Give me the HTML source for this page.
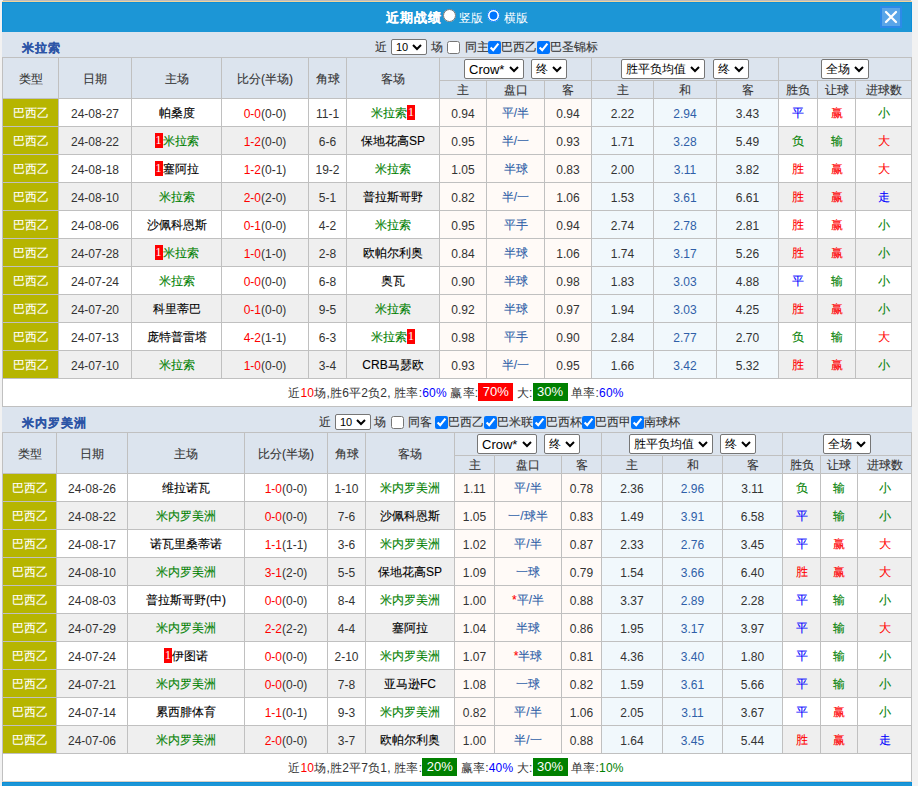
<!DOCTYPE html><html><head><meta charset="utf-8"><style>
*{margin:0;padding:0;box-sizing:border-box}
html,body{width:918px;height:786px;overflow:hidden;background:#f2f2f2}
body{position:relative;font-family:"Liberation Sans",sans-serif;font-size:12px;color:#333}
div{position:absolute}
.t{text-align:center;white-space:nowrap}
.s{white-space:nowrap;line-height:14px}
.bd{-webkit-text-stroke:0;display:inline-block;background:#f00;color:#fff;font-weight:normal;width:8px;height:15px;line-height:15px;font-size:12px;text-align:center;vertical-align:middle;position:relative;top:-1px;font-family:"Liberation Serif",serif}
.rb{-webkit-text-stroke:0;display:inline-block;background:#f00;color:#fff;font-weight:normal;width:35px;text-align:center;height:18px;line-height:18px;font-size:13px;letter-spacing:0;position:relative;top:-1px}
.gb{-webkit-text-stroke:0;display:inline-block;background:#008000;color:#fff;font-weight:normal;width:35px;text-align:center;height:18px;line-height:18px;font-size:13px;letter-spacing:0;position:relative;top:-1px}
.sl{background:#fff;border:1px solid #767676;border-radius:2px}
.st{white-space:nowrap;color:#000}
input.cb{position:absolute;margin:0;width:13px;height:13px}
input.rd{position:absolute;margin:0;width:13px;height:13px}
</style></head><body><div style="left:3px;top:0px;width:908px;height:1px;background:#bcbcc0;"></div><div style="left:2px;top:1px;width:910px;height:1px;background:#f0d49a;"></div><div style="left:2px;top:2px;width:910px;height:30px;background:#1c96d6;box-shadow:inset 1px 1px 0 #0b8ed9,inset -1px 0 0 #0b8ed9"></div><div style="left:2px;top:32px;width:910px;height:750px;background:#dce4ee;"></div><div class="s" style="left:386px;top:11px;color:#fff;font-weight:bold;font-size:13px;letter-spacing:1px;-webkit-text-stroke:0.1px #fff">近期战绩</div><input type="radio" name="r" class="rd" style="left:443px;top:9px"><div class="s" style="left:459px;top:11px;color:#fff">竖版</div><input type="radio" name="r" class="rd" style="left:487px;top:9px" checked><div class="s" style="left:504px;top:11px;color:#fff">横版</div><div style="left:880px;top:6px;width:22px;height:22px;background:#5aa5e8;box-shadow:inset 0 0 0 2px #2d8ae8"></div><svg style="position:absolute;left:880px;top:6px" width="22" height="22"><path d="M6 6L16 16M16 6L6 16" stroke="#fff" stroke-width="2.3" stroke-linecap="round"/></svg><div class="s" style="left:22px;top:41px;font-weight:bold;font-size:12px;letter-spacing:1px;color:#2c54a6;-webkit-text-stroke:0.15px #2c54a6">米拉索</div><div style="left:2px;top:57px;width:910px;height:350px;background:#c0c0c0;"></div><div style="left:3px;top:58px;width:55px;height:40px;background:#dce4ee;"></div><div class="t" style="left:3px;top:59px;width:55px;height:40px;line-height:40px;color:#333333;-webkit-text-stroke:0.1px currentColor">类型</div><div style="left:59px;top:58px;width:72px;height:40px;background:#dce4ee;"></div><div class="t" style="left:59px;top:59px;width:72px;height:40px;line-height:40px;color:#333333;-webkit-text-stroke:0.1px currentColor">日期</div><div style="left:132px;top:58px;width:89px;height:40px;background:#dce4ee;"></div><div class="t" style="left:132px;top:59px;width:89px;height:40px;line-height:40px;color:#333333;-webkit-text-stroke:0.1px currentColor">主场</div><div style="left:222px;top:58px;width:86px;height:40px;background:#dce4ee;"></div><div class="t" style="left:222px;top:59px;width:86px;height:40px;line-height:40px;color:#333333;-webkit-text-stroke:0.1px currentColor">比分(半场)</div><div style="left:309px;top:58px;width:37px;height:40px;background:#dce4ee;"></div><div class="t" style="left:309px;top:59px;width:37px;height:40px;line-height:40px;color:#333333;-webkit-text-stroke:0.1px currentColor">角球</div><div style="left:347px;top:58px;width:92px;height:40px;background:#dce4ee;"></div><div class="t" style="left:347px;top:59px;width:92px;height:40px;line-height:40px;color:#333333;-webkit-text-stroke:0.1px currentColor">客场</div><div style="left:440px;top:58px;width:151px;height:22px;background:#dce4ee;"></div><div style="left:592px;top:58px;width:186px;height:22px;background:#dce4ee;"></div><div style="left:779px;top:58px;width:132px;height:22px;background:#dce4ee;"></div><div style="left:440px;top:81px;width:46px;height:17px;background:#dce4ee;"></div><div class="t" style="left:440px;top:82px;width:46px;height:17px;line-height:17px;color:#333333;-webkit-text-stroke:0.1px currentColor">主</div><div style="left:487px;top:81px;width:57px;height:17px;background:#dce4ee;"></div><div class="t" style="left:487px;top:82px;width:57px;height:17px;line-height:17px;color:#333333;-webkit-text-stroke:0.1px currentColor">盘口</div><div style="left:545px;top:81px;width:46px;height:17px;background:#dce4ee;"></div><div class="t" style="left:545px;top:82px;width:46px;height:17px;line-height:17px;color:#333333;-webkit-text-stroke:0.1px currentColor">客</div><div style="left:592px;top:81px;width:61px;height:17px;background:#dce4ee;"></div><div class="t" style="left:592px;top:82px;width:61px;height:17px;line-height:17px;color:#333333;-webkit-text-stroke:0.1px currentColor">主</div><div style="left:654px;top:81px;width:62px;height:17px;background:#dce4ee;"></div><div class="t" style="left:654px;top:82px;width:62px;height:17px;line-height:17px;color:#333333;-webkit-text-stroke:0.1px currentColor">和</div><div style="left:717px;top:81px;width:61px;height:17px;background:#dce4ee;"></div><div class="t" style="left:717px;top:82px;width:61px;height:17px;line-height:17px;color:#333333;-webkit-text-stroke:0.1px currentColor">客</div><div style="left:779px;top:81px;width:38px;height:17px;background:#dce4ee;"></div><div class="t" style="left:779px;top:82px;width:38px;height:17px;line-height:17px;color:#333333;-webkit-text-stroke:0.1px currentColor">胜负</div><div style="left:818px;top:81px;width:37px;height:17px;background:#dce4ee;"></div><div class="t" style="left:818px;top:82px;width:37px;height:17px;line-height:17px;color:#333333;-webkit-text-stroke:0.1px currentColor">让球</div><div style="left:856px;top:81px;width:55px;height:17px;background:#dce4ee;"></div><div class="t" style="left:856px;top:82px;width:55px;height:17px;line-height:17px;color:#333333;-webkit-text-stroke:0.1px currentColor">进球数</div><div style="left:3px;top:99px;width:55px;height:27px;background:#b6b500;"></div><div class="t" style="left:3px;top:100px;width:55px;height:27px;line-height:27px;color:#fff;-webkit-text-stroke:0.1px currentColor">巴西乙</div><div style="left:59px;top:99px;width:72px;height:27px;background:#ffffff;"></div><div class="t" style="left:59px;top:101px;width:72px;height:27px;line-height:27px;color:#333333">24-08-27</div><div style="left:132px;top:99px;width:89px;height:27px;background:#ffffff;"></div><div class="t" style="left:132px;top:100px;width:89px;height:27px;line-height:27px;color:#000;-webkit-text-stroke:0.1px currentColor">帕桑度</div><div style="left:222px;top:99px;width:86px;height:27px;background:#ffffff;"></div><div class="t" style="left:222px;top:101px;width:86px;height:27px;line-height:27px;color:#333333"><span style="color:#ff0000">0-0</span>(0-0)</div><div style="left:309px;top:99px;width:37px;height:27px;background:#ffffff;"></div><div class="t" style="left:309px;top:101px;width:37px;height:27px;line-height:27px;color:#333333">11-1</div><div style="left:347px;top:99px;width:92px;height:27px;background:#ffffff;"></div><div class="t" style="left:347px;top:100px;width:92px;height:27px;line-height:27px;color:#000;-webkit-text-stroke:0.1px currentColor"><span style="color:#008000">米拉索</span><b class="bd">1</b></div><div style="left:440px;top:99px;width:46px;height:27px;background:#fffaf7;"></div><div class="t" style="left:440px;top:101px;width:46px;height:27px;line-height:27px;color:#333333">0.94</div><div style="left:487px;top:99px;width:57px;height:27px;background:#fffaf7;"></div><div class="t" style="left:487px;top:100px;width:57px;height:27px;line-height:27px;color:#2f5fa8;-webkit-text-stroke:0.1px currentColor">平/半</div><div style="left:545px;top:99px;width:46px;height:27px;background:#fffaf7;"></div><div class="t" style="left:545px;top:101px;width:46px;height:27px;line-height:27px;color:#333333">0.94</div><div style="left:592px;top:99px;width:61px;height:27px;background:#f1f8fc;"></div><div class="t" style="left:592px;top:101px;width:61px;height:27px;line-height:27px;color:#333333">2.22</div><div style="left:654px;top:99px;width:62px;height:27px;background:#f1f8fc;"></div><div class="t" style="left:654px;top:101px;width:62px;height:27px;line-height:27px;color:#2f5fa8">2.94</div><div style="left:717px;top:99px;width:61px;height:27px;background:#f1f8fc;"></div><div class="t" style="left:717px;top:101px;width:61px;height:27px;line-height:27px;color:#333333">3.43</div><div style="left:779px;top:99px;width:38px;height:27px;background:#ffffff;"></div><div class="t" style="left:779px;top:100px;width:38px;height:27px;line-height:27px;color:#0000ff;-webkit-text-stroke:0.1px currentColor">平</div><div style="left:818px;top:99px;width:37px;height:27px;background:#ffffff;"></div><div class="t" style="left:818px;top:100px;width:37px;height:27px;line-height:27px;color:#ff0000;-webkit-text-stroke:0.1px currentColor">赢</div><div style="left:856px;top:99px;width:55px;height:27px;background:#ffffff;"></div><div class="t" style="left:856px;top:100px;width:55px;height:27px;line-height:27px;color:#008000;-webkit-text-stroke:0.1px currentColor">小</div><div style="left:3px;top:127px;width:55px;height:27px;background:#b6b500;"></div><div class="t" style="left:3px;top:128px;width:55px;height:27px;line-height:27px;color:#fff;-webkit-text-stroke:0.1px currentColor">巴西乙</div><div style="left:59px;top:127px;width:72px;height:27px;background:#efefef;"></div><div class="t" style="left:59px;top:129px;width:72px;height:27px;line-height:27px;color:#333333">24-08-22</div><div style="left:132px;top:127px;width:89px;height:27px;background:#efefef;"></div><div class="t" style="left:132px;top:128px;width:89px;height:27px;line-height:27px;color:#000;-webkit-text-stroke:0.1px currentColor"><b class="bd">1</b><span style="color:#008000">米拉索</span></div><div style="left:222px;top:127px;width:86px;height:27px;background:#efefef;"></div><div class="t" style="left:222px;top:129px;width:86px;height:27px;line-height:27px;color:#333333"><span style="color:#ff0000">1-2</span>(0-0)</div><div style="left:309px;top:127px;width:37px;height:27px;background:#efefef;"></div><div class="t" style="left:309px;top:129px;width:37px;height:27px;line-height:27px;color:#333333">6-6</div><div style="left:347px;top:127px;width:92px;height:27px;background:#efefef;"></div><div class="t" style="left:347px;top:128px;width:92px;height:27px;line-height:27px;color:#000;-webkit-text-stroke:0.1px currentColor">保地花高SP</div><div style="left:440px;top:127px;width:46px;height:27px;background:#fffaf7;"></div><div class="t" style="left:440px;top:129px;width:46px;height:27px;line-height:27px;color:#333333">0.95</div><div style="left:487px;top:127px;width:57px;height:27px;background:#fffaf7;"></div><div class="t" style="left:487px;top:128px;width:57px;height:27px;line-height:27px;color:#2f5fa8;-webkit-text-stroke:0.1px currentColor">半/一</div><div style="left:545px;top:127px;width:46px;height:27px;background:#fffaf7;"></div><div class="t" style="left:545px;top:129px;width:46px;height:27px;line-height:27px;color:#333333">0.93</div><div style="left:592px;top:127px;width:61px;height:27px;background:#f1f8fc;"></div><div class="t" style="left:592px;top:129px;width:61px;height:27px;line-height:27px;color:#333333">1.71</div><div style="left:654px;top:127px;width:62px;height:27px;background:#f1f8fc;"></div><div class="t" style="left:654px;top:129px;width:62px;height:27px;line-height:27px;color:#2f5fa8">3.28</div><div style="left:717px;top:127px;width:61px;height:27px;background:#f1f8fc;"></div><div class="t" style="left:717px;top:129px;width:61px;height:27px;line-height:27px;color:#333333">5.49</div><div style="left:779px;top:127px;width:38px;height:27px;background:#efefef;"></div><div class="t" style="left:779px;top:128px;width:38px;height:27px;line-height:27px;color:#008000;-webkit-text-stroke:0.1px currentColor">负</div><div style="left:818px;top:127px;width:37px;height:27px;background:#efefef;"></div><div class="t" style="left:818px;top:128px;width:37px;height:27px;line-height:27px;color:#008000;-webkit-text-stroke:0.1px currentColor">输</div><div style="left:856px;top:127px;width:55px;height:27px;background:#efefef;"></div><div class="t" style="left:856px;top:128px;width:55px;height:27px;line-height:27px;color:#ff0000;-webkit-text-stroke:0.1px currentColor">大</div><div style="left:3px;top:155px;width:55px;height:27px;background:#b6b500;"></div><div class="t" style="left:3px;top:156px;width:55px;height:27px;line-height:27px;color:#fff;-webkit-text-stroke:0.1px currentColor">巴西乙</div><div style="left:59px;top:155px;width:72px;height:27px;background:#ffffff;"></div><div class="t" style="left:59px;top:157px;width:72px;height:27px;line-height:27px;color:#333333">24-08-18</div><div style="left:132px;top:155px;width:89px;height:27px;background:#ffffff;"></div><div class="t" style="left:132px;top:156px;width:89px;height:27px;line-height:27px;color:#000;-webkit-text-stroke:0.1px currentColor"><b class="bd">1</b>塞阿拉</div><div style="left:222px;top:155px;width:86px;height:27px;background:#ffffff;"></div><div class="t" style="left:222px;top:157px;width:86px;height:27px;line-height:27px;color:#333333"><span style="color:#ff0000">1-2</span>(0-1)</div><div style="left:309px;top:155px;width:37px;height:27px;background:#ffffff;"></div><div class="t" style="left:309px;top:157px;width:37px;height:27px;line-height:27px;color:#333333">19-2</div><div style="left:347px;top:155px;width:92px;height:27px;background:#ffffff;"></div><div class="t" style="left:347px;top:156px;width:92px;height:27px;line-height:27px;color:#000;-webkit-text-stroke:0.1px currentColor"><span style="color:#008000">米拉索</span></div><div style="left:440px;top:155px;width:46px;height:27px;background:#fffaf7;"></div><div class="t" style="left:440px;top:157px;width:46px;height:27px;line-height:27px;color:#333333">1.05</div><div style="left:487px;top:155px;width:57px;height:27px;background:#fffaf7;"></div><div class="t" style="left:487px;top:156px;width:57px;height:27px;line-height:27px;color:#2f5fa8;-webkit-text-stroke:0.1px currentColor">半球</div><div style="left:545px;top:155px;width:46px;height:27px;background:#fffaf7;"></div><div class="t" style="left:545px;top:157px;width:46px;height:27px;line-height:27px;color:#333333">0.83</div><div style="left:592px;top:155px;width:61px;height:27px;background:#f1f8fc;"></div><div class="t" style="left:592px;top:157px;width:61px;height:27px;line-height:27px;color:#333333">2.00</div><div style="left:654px;top:155px;width:62px;height:27px;background:#f1f8fc;"></div><div class="t" style="left:654px;top:157px;width:62px;height:27px;line-height:27px;color:#2f5fa8">3.11</div><div style="left:717px;top:155px;width:61px;height:27px;background:#f1f8fc;"></div><div class="t" style="left:717px;top:157px;width:61px;height:27px;line-height:27px;color:#333333">3.82</div><div style="left:779px;top:155px;width:38px;height:27px;background:#ffffff;"></div><div class="t" style="left:779px;top:156px;width:38px;height:27px;line-height:27px;color:#ff0000;-webkit-text-stroke:0.1px currentColor">胜</div><div style="left:818px;top:155px;width:37px;height:27px;background:#ffffff;"></div><div class="t" style="left:818px;top:156px;width:37px;height:27px;line-height:27px;color:#ff0000;-webkit-text-stroke:0.1px currentColor">赢</div><div style="left:856px;top:155px;width:55px;height:27px;background:#ffffff;"></div><div class="t" style="left:856px;top:156px;width:55px;height:27px;line-height:27px;color:#ff0000;-webkit-text-stroke:0.1px currentColor">大</div><div style="left:3px;top:183px;width:55px;height:27px;background:#b6b500;"></div><div class="t" style="left:3px;top:184px;width:55px;height:27px;line-height:27px;color:#fff;-webkit-text-stroke:0.1px currentColor">巴西乙</div><div style="left:59px;top:183px;width:72px;height:27px;background:#efefef;"></div><div class="t" style="left:59px;top:185px;width:72px;height:27px;line-height:27px;color:#333333">24-08-10</div><div style="left:132px;top:183px;width:89px;height:27px;background:#efefef;"></div><div class="t" style="left:132px;top:184px;width:89px;height:27px;line-height:27px;color:#000;-webkit-text-stroke:0.1px currentColor"><span style="color:#008000">米拉索</span></div><div style="left:222px;top:183px;width:86px;height:27px;background:#efefef;"></div><div class="t" style="left:222px;top:185px;width:86px;height:27px;line-height:27px;color:#333333"><span style="color:#ff0000">2-0</span>(2-0)</div><div style="left:309px;top:183px;width:37px;height:27px;background:#efefef;"></div><div class="t" style="left:309px;top:185px;width:37px;height:27px;line-height:27px;color:#333333">5-1</div><div style="left:347px;top:183px;width:92px;height:27px;background:#efefef;"></div><div class="t" style="left:347px;top:184px;width:92px;height:27px;line-height:27px;color:#000;-webkit-text-stroke:0.1px currentColor">普拉斯哥野</div><div style="left:440px;top:183px;width:46px;height:27px;background:#fffaf7;"></div><div class="t" style="left:440px;top:185px;width:46px;height:27px;line-height:27px;color:#333333">0.82</div><div style="left:487px;top:183px;width:57px;height:27px;background:#fffaf7;"></div><div class="t" style="left:487px;top:184px;width:57px;height:27px;line-height:27px;color:#2f5fa8;-webkit-text-stroke:0.1px currentColor">半/一</div><div style="left:545px;top:183px;width:46px;height:27px;background:#fffaf7;"></div><div class="t" style="left:545px;top:185px;width:46px;height:27px;line-height:27px;color:#333333">1.06</div><div style="left:592px;top:183px;width:61px;height:27px;background:#f1f8fc;"></div><div class="t" style="left:592px;top:185px;width:61px;height:27px;line-height:27px;color:#333333">1.53</div><div style="left:654px;top:183px;width:62px;height:27px;background:#f1f8fc;"></div><div class="t" style="left:654px;top:185px;width:62px;height:27px;line-height:27px;color:#2f5fa8">3.61</div><div style="left:717px;top:183px;width:61px;height:27px;background:#f1f8fc;"></div><div class="t" style="left:717px;top:185px;width:61px;height:27px;line-height:27px;color:#333333">6.61</div><div style="left:779px;top:183px;width:38px;height:27px;background:#efefef;"></div><div class="t" style="left:779px;top:184px;width:38px;height:27px;line-height:27px;color:#ff0000;-webkit-text-stroke:0.1px currentColor">胜</div><div style="left:818px;top:183px;width:37px;height:27px;background:#efefef;"></div><div class="t" style="left:818px;top:184px;width:37px;height:27px;line-height:27px;color:#ff0000;-webkit-text-stroke:0.1px currentColor">赢</div><div style="left:856px;top:183px;width:55px;height:27px;background:#efefef;"></div><div class="t" style="left:856px;top:184px;width:55px;height:27px;line-height:27px;color:#0000ff;-webkit-text-stroke:0.1px currentColor">走</div><div style="left:3px;top:211px;width:55px;height:27px;background:#b6b500;"></div><div class="t" style="left:3px;top:212px;width:55px;height:27px;line-height:27px;color:#fff;-webkit-text-stroke:0.1px currentColor">巴西乙</div><div style="left:59px;top:211px;width:72px;height:27px;background:#ffffff;"></div><div class="t" style="left:59px;top:213px;width:72px;height:27px;line-height:27px;color:#333333">24-08-06</div><div style="left:132px;top:211px;width:89px;height:27px;background:#ffffff;"></div><div class="t" style="left:132px;top:212px;width:89px;height:27px;line-height:27px;color:#000;-webkit-text-stroke:0.1px currentColor">沙佩科恩斯</div><div style="left:222px;top:211px;width:86px;height:27px;background:#ffffff;"></div><div class="t" style="left:222px;top:213px;width:86px;height:27px;line-height:27px;color:#333333"><span style="color:#ff0000">0-1</span>(0-0)</div><div style="left:309px;top:211px;width:37px;height:27px;background:#ffffff;"></div><div class="t" style="left:309px;top:213px;width:37px;height:27px;line-height:27px;color:#333333">4-2</div><div style="left:347px;top:211px;width:92px;height:27px;background:#ffffff;"></div><div class="t" style="left:347px;top:212px;width:92px;height:27px;line-height:27px;color:#000;-webkit-text-stroke:0.1px currentColor"><span style="color:#008000">米拉索</span></div><div style="left:440px;top:211px;width:46px;height:27px;background:#fffaf7;"></div><div class="t" style="left:440px;top:213px;width:46px;height:27px;line-height:27px;color:#333333">0.95</div><div style="left:487px;top:211px;width:57px;height:27px;background:#fffaf7;"></div><div class="t" style="left:487px;top:212px;width:57px;height:27px;line-height:27px;color:#2f5fa8;-webkit-text-stroke:0.1px currentColor">平手</div><div style="left:545px;top:211px;width:46px;height:27px;background:#fffaf7;"></div><div class="t" style="left:545px;top:213px;width:46px;height:27px;line-height:27px;color:#333333">0.94</div><div style="left:592px;top:211px;width:61px;height:27px;background:#f1f8fc;"></div><div class="t" style="left:592px;top:213px;width:61px;height:27px;line-height:27px;color:#333333">2.74</div><div style="left:654px;top:211px;width:62px;height:27px;background:#f1f8fc;"></div><div class="t" style="left:654px;top:213px;width:62px;height:27px;line-height:27px;color:#2f5fa8">2.78</div><div style="left:717px;top:211px;width:61px;height:27px;background:#f1f8fc;"></div><div class="t" style="left:717px;top:213px;width:61px;height:27px;line-height:27px;color:#333333">2.81</div><div style="left:779px;top:211px;width:38px;height:27px;background:#ffffff;"></div><div class="t" style="left:779px;top:212px;width:38px;height:27px;line-height:27px;color:#ff0000;-webkit-text-stroke:0.1px currentColor">胜</div><div style="left:818px;top:211px;width:37px;height:27px;background:#ffffff;"></div><div class="t" style="left:818px;top:212px;width:37px;height:27px;line-height:27px;color:#ff0000;-webkit-text-stroke:0.1px currentColor">赢</div><div style="left:856px;top:211px;width:55px;height:27px;background:#ffffff;"></div><div class="t" style="left:856px;top:212px;width:55px;height:27px;line-height:27px;color:#008000;-webkit-text-stroke:0.1px currentColor">小</div><div style="left:3px;top:239px;width:55px;height:27px;background:#b6b500;"></div><div class="t" style="left:3px;top:240px;width:55px;height:27px;line-height:27px;color:#fff;-webkit-text-stroke:0.1px currentColor">巴西乙</div><div style="left:59px;top:239px;width:72px;height:27px;background:#efefef;"></div><div class="t" style="left:59px;top:241px;width:72px;height:27px;line-height:27px;color:#333333">24-07-28</div><div style="left:132px;top:239px;width:89px;height:27px;background:#efefef;"></div><div class="t" style="left:132px;top:240px;width:89px;height:27px;line-height:27px;color:#000;-webkit-text-stroke:0.1px currentColor"><b class="bd">1</b><span style="color:#008000">米拉索</span></div><div style="left:222px;top:239px;width:86px;height:27px;background:#efefef;"></div><div class="t" style="left:222px;top:241px;width:86px;height:27px;line-height:27px;color:#333333"><span style="color:#ff0000">1-0</span>(1-0)</div><div style="left:309px;top:239px;width:37px;height:27px;background:#efefef;"></div><div class="t" style="left:309px;top:241px;width:37px;height:27px;line-height:27px;color:#333333">2-8</div><div style="left:347px;top:239px;width:92px;height:27px;background:#efefef;"></div><div class="t" style="left:347px;top:240px;width:92px;height:27px;line-height:27px;color:#000;-webkit-text-stroke:0.1px currentColor">欧帕尔利奥</div><div style="left:440px;top:239px;width:46px;height:27px;background:#fffaf7;"></div><div class="t" style="left:440px;top:241px;width:46px;height:27px;line-height:27px;color:#333333">0.84</div><div style="left:487px;top:239px;width:57px;height:27px;background:#fffaf7;"></div><div class="t" style="left:487px;top:240px;width:57px;height:27px;line-height:27px;color:#2f5fa8;-webkit-text-stroke:0.1px currentColor">半球</div><div style="left:545px;top:239px;width:46px;height:27px;background:#fffaf7;"></div><div class="t" style="left:545px;top:241px;width:46px;height:27px;line-height:27px;color:#333333">1.06</div><div style="left:592px;top:239px;width:61px;height:27px;background:#f1f8fc;"></div><div class="t" style="left:592px;top:241px;width:61px;height:27px;line-height:27px;color:#333333">1.74</div><div style="left:654px;top:239px;width:62px;height:27px;background:#f1f8fc;"></div><div class="t" style="left:654px;top:241px;width:62px;height:27px;line-height:27px;color:#2f5fa8">3.17</div><div style="left:717px;top:239px;width:61px;height:27px;background:#f1f8fc;"></div><div class="t" style="left:717px;top:241px;width:61px;height:27px;line-height:27px;color:#333333">5.26</div><div style="left:779px;top:239px;width:38px;height:27px;background:#efefef;"></div><div class="t" style="left:779px;top:240px;width:38px;height:27px;line-height:27px;color:#ff0000;-webkit-text-stroke:0.1px currentColor">胜</div><div style="left:818px;top:239px;width:37px;height:27px;background:#efefef;"></div><div class="t" style="left:818px;top:240px;width:37px;height:27px;line-height:27px;color:#ff0000;-webkit-text-stroke:0.1px currentColor">赢</div><div style="left:856px;top:239px;width:55px;height:27px;background:#efefef;"></div><div class="t" style="left:856px;top:240px;width:55px;height:27px;line-height:27px;color:#008000;-webkit-text-stroke:0.1px currentColor">小</div><div style="left:3px;top:267px;width:55px;height:27px;background:#b6b500;"></div><div class="t" style="left:3px;top:268px;width:55px;height:27px;line-height:27px;color:#fff;-webkit-text-stroke:0.1px currentColor">巴西乙</div><div style="left:59px;top:267px;width:72px;height:27px;background:#ffffff;"></div><div class="t" style="left:59px;top:269px;width:72px;height:27px;line-height:27px;color:#333333">24-07-24</div><div style="left:132px;top:267px;width:89px;height:27px;background:#ffffff;"></div><div class="t" style="left:132px;top:268px;width:89px;height:27px;line-height:27px;color:#000;-webkit-text-stroke:0.1px currentColor"><span style="color:#008000">米拉索</span></div><div style="left:222px;top:267px;width:86px;height:27px;background:#ffffff;"></div><div class="t" style="left:222px;top:269px;width:86px;height:27px;line-height:27px;color:#333333"><span style="color:#ff0000">0-0</span>(0-0)</div><div style="left:309px;top:267px;width:37px;height:27px;background:#ffffff;"></div><div class="t" style="left:309px;top:269px;width:37px;height:27px;line-height:27px;color:#333333">6-8</div><div style="left:347px;top:267px;width:92px;height:27px;background:#ffffff;"></div><div class="t" style="left:347px;top:268px;width:92px;height:27px;line-height:27px;color:#000;-webkit-text-stroke:0.1px currentColor">奥瓦</div><div style="left:440px;top:267px;width:46px;height:27px;background:#fffaf7;"></div><div class="t" style="left:440px;top:269px;width:46px;height:27px;line-height:27px;color:#333333">0.90</div><div style="left:487px;top:267px;width:57px;height:27px;background:#fffaf7;"></div><div class="t" style="left:487px;top:268px;width:57px;height:27px;line-height:27px;color:#2f5fa8;-webkit-text-stroke:0.1px currentColor">半球</div><div style="left:545px;top:267px;width:46px;height:27px;background:#fffaf7;"></div><div class="t" style="left:545px;top:269px;width:46px;height:27px;line-height:27px;color:#333333">0.98</div><div style="left:592px;top:267px;width:61px;height:27px;background:#f1f8fc;"></div><div class="t" style="left:592px;top:269px;width:61px;height:27px;line-height:27px;color:#333333">1.83</div><div style="left:654px;top:267px;width:62px;height:27px;background:#f1f8fc;"></div><div class="t" style="left:654px;top:269px;width:62px;height:27px;line-height:27px;color:#2f5fa8">3.03</div><div style="left:717px;top:267px;width:61px;height:27px;background:#f1f8fc;"></div><div class="t" style="left:717px;top:269px;width:61px;height:27px;line-height:27px;color:#333333">4.88</div><div style="left:779px;top:267px;width:38px;height:27px;background:#ffffff;"></div><div class="t" style="left:779px;top:268px;width:38px;height:27px;line-height:27px;color:#0000ff;-webkit-text-stroke:0.1px currentColor">平</div><div style="left:818px;top:267px;width:37px;height:27px;background:#ffffff;"></div><div class="t" style="left:818px;top:268px;width:37px;height:27px;line-height:27px;color:#008000;-webkit-text-stroke:0.1px currentColor">输</div><div style="left:856px;top:267px;width:55px;height:27px;background:#ffffff;"></div><div class="t" style="left:856px;top:268px;width:55px;height:27px;line-height:27px;color:#008000;-webkit-text-stroke:0.1px currentColor">小</div><div style="left:3px;top:295px;width:55px;height:27px;background:#b6b500;"></div><div class="t" style="left:3px;top:296px;width:55px;height:27px;line-height:27px;color:#fff;-webkit-text-stroke:0.1px currentColor">巴西乙</div><div style="left:59px;top:295px;width:72px;height:27px;background:#efefef;"></div><div class="t" style="left:59px;top:297px;width:72px;height:27px;line-height:27px;color:#333333">24-07-20</div><div style="left:132px;top:295px;width:89px;height:27px;background:#efefef;"></div><div class="t" style="left:132px;top:296px;width:89px;height:27px;line-height:27px;color:#000;-webkit-text-stroke:0.1px currentColor">科里蒂巴</div><div style="left:222px;top:295px;width:86px;height:27px;background:#efefef;"></div><div class="t" style="left:222px;top:297px;width:86px;height:27px;line-height:27px;color:#333333"><span style="color:#ff0000">0-1</span>(0-0)</div><div style="left:309px;top:295px;width:37px;height:27px;background:#efefef;"></div><div class="t" style="left:309px;top:297px;width:37px;height:27px;line-height:27px;color:#333333">9-5</div><div style="left:347px;top:295px;width:92px;height:27px;background:#efefef;"></div><div class="t" style="left:347px;top:296px;width:92px;height:27px;line-height:27px;color:#000;-webkit-text-stroke:0.1px currentColor"><span style="color:#008000">米拉索</span></div><div style="left:440px;top:295px;width:46px;height:27px;background:#fffaf7;"></div><div class="t" style="left:440px;top:297px;width:46px;height:27px;line-height:27px;color:#333333">0.92</div><div style="left:487px;top:295px;width:57px;height:27px;background:#fffaf7;"></div><div class="t" style="left:487px;top:296px;width:57px;height:27px;line-height:27px;color:#2f5fa8;-webkit-text-stroke:0.1px currentColor">半球</div><div style="left:545px;top:295px;width:46px;height:27px;background:#fffaf7;"></div><div class="t" style="left:545px;top:297px;width:46px;height:27px;line-height:27px;color:#333333">0.97</div><div style="left:592px;top:295px;width:61px;height:27px;background:#f1f8fc;"></div><div class="t" style="left:592px;top:297px;width:61px;height:27px;line-height:27px;color:#333333">1.94</div><div style="left:654px;top:295px;width:62px;height:27px;background:#f1f8fc;"></div><div class="t" style="left:654px;top:297px;width:62px;height:27px;line-height:27px;color:#2f5fa8">3.03</div><div style="left:717px;top:295px;width:61px;height:27px;background:#f1f8fc;"></div><div class="t" style="left:717px;top:297px;width:61px;height:27px;line-height:27px;color:#333333">4.25</div><div style="left:779px;top:295px;width:38px;height:27px;background:#efefef;"></div><div class="t" style="left:779px;top:296px;width:38px;height:27px;line-height:27px;color:#ff0000;-webkit-text-stroke:0.1px currentColor">胜</div><div style="left:818px;top:295px;width:37px;height:27px;background:#efefef;"></div><div class="t" style="left:818px;top:296px;width:37px;height:27px;line-height:27px;color:#ff0000;-webkit-text-stroke:0.1px currentColor">赢</div><div style="left:856px;top:295px;width:55px;height:27px;background:#efefef;"></div><div class="t" style="left:856px;top:296px;width:55px;height:27px;line-height:27px;color:#008000;-webkit-text-stroke:0.1px currentColor">小</div><div style="left:3px;top:323px;width:55px;height:27px;background:#b6b500;"></div><div class="t" style="left:3px;top:324px;width:55px;height:27px;line-height:27px;color:#fff;-webkit-text-stroke:0.1px currentColor">巴西乙</div><div style="left:59px;top:323px;width:72px;height:27px;background:#ffffff;"></div><div class="t" style="left:59px;top:325px;width:72px;height:27px;line-height:27px;color:#333333">24-07-13</div><div style="left:132px;top:323px;width:89px;height:27px;background:#ffffff;"></div><div class="t" style="left:132px;top:324px;width:89px;height:27px;line-height:27px;color:#000;-webkit-text-stroke:0.1px currentColor">庞特普雷塔</div><div style="left:222px;top:323px;width:86px;height:27px;background:#ffffff;"></div><div class="t" style="left:222px;top:325px;width:86px;height:27px;line-height:27px;color:#333333"><span style="color:#ff0000">4-2</span>(1-1)</div><div style="left:309px;top:323px;width:37px;height:27px;background:#ffffff;"></div><div class="t" style="left:309px;top:325px;width:37px;height:27px;line-height:27px;color:#333333">6-3</div><div style="left:347px;top:323px;width:92px;height:27px;background:#ffffff;"></div><div class="t" style="left:347px;top:324px;width:92px;height:27px;line-height:27px;color:#000;-webkit-text-stroke:0.1px currentColor"><span style="color:#008000">米拉索</span><b class="bd">1</b></div><div style="left:440px;top:323px;width:46px;height:27px;background:#fffaf7;"></div><div class="t" style="left:440px;top:325px;width:46px;height:27px;line-height:27px;color:#333333">0.98</div><div style="left:487px;top:323px;width:57px;height:27px;background:#fffaf7;"></div><div class="t" style="left:487px;top:324px;width:57px;height:27px;line-height:27px;color:#2f5fa8;-webkit-text-stroke:0.1px currentColor">平手</div><div style="left:545px;top:323px;width:46px;height:27px;background:#fffaf7;"></div><div class="t" style="left:545px;top:325px;width:46px;height:27px;line-height:27px;color:#333333">0.90</div><div style="left:592px;top:323px;width:61px;height:27px;background:#f1f8fc;"></div><div class="t" style="left:592px;top:325px;width:61px;height:27px;line-height:27px;color:#333333">2.84</div><div style="left:654px;top:323px;width:62px;height:27px;background:#f1f8fc;"></div><div class="t" style="left:654px;top:325px;width:62px;height:27px;line-height:27px;color:#2f5fa8">2.77</div><div style="left:717px;top:323px;width:61px;height:27px;background:#f1f8fc;"></div><div class="t" style="left:717px;top:325px;width:61px;height:27px;line-height:27px;color:#333333">2.70</div><div style="left:779px;top:323px;width:38px;height:27px;background:#ffffff;"></div><div class="t" style="left:779px;top:324px;width:38px;height:27px;line-height:27px;color:#008000;-webkit-text-stroke:0.1px currentColor">负</div><div style="left:818px;top:323px;width:37px;height:27px;background:#ffffff;"></div><div class="t" style="left:818px;top:324px;width:37px;height:27px;line-height:27px;color:#008000;-webkit-text-stroke:0.1px currentColor">输</div><div style="left:856px;top:323px;width:55px;height:27px;background:#ffffff;"></div><div class="t" style="left:856px;top:324px;width:55px;height:27px;line-height:27px;color:#ff0000;-webkit-text-stroke:0.1px currentColor">大</div><div style="left:3px;top:351px;width:55px;height:27px;background:#b6b500;"></div><div class="t" style="left:3px;top:352px;width:55px;height:27px;line-height:27px;color:#fff;-webkit-text-stroke:0.1px currentColor">巴西乙</div><div style="left:59px;top:351px;width:72px;height:27px;background:#efefef;"></div><div class="t" style="left:59px;top:353px;width:72px;height:27px;line-height:27px;color:#333333">24-07-10</div><div style="left:132px;top:351px;width:89px;height:27px;background:#efefef;"></div><div class="t" style="left:132px;top:352px;width:89px;height:27px;line-height:27px;color:#000;-webkit-text-stroke:0.1px currentColor"><span style="color:#008000">米拉索</span></div><div style="left:222px;top:351px;width:86px;height:27px;background:#efefef;"></div><div class="t" style="left:222px;top:353px;width:86px;height:27px;line-height:27px;color:#333333"><span style="color:#ff0000">1-0</span>(0-0)</div><div style="left:309px;top:351px;width:37px;height:27px;background:#efefef;"></div><div class="t" style="left:309px;top:353px;width:37px;height:27px;line-height:27px;color:#333333">3-4</div><div style="left:347px;top:351px;width:92px;height:27px;background:#efefef;"></div><div class="t" style="left:347px;top:352px;width:92px;height:27px;line-height:27px;color:#000;-webkit-text-stroke:0.1px currentColor">CRB马瑟欧</div><div style="left:440px;top:351px;width:46px;height:27px;background:#fffaf7;"></div><div class="t" style="left:440px;top:353px;width:46px;height:27px;line-height:27px;color:#333333">0.93</div><div style="left:487px;top:351px;width:57px;height:27px;background:#fffaf7;"></div><div class="t" style="left:487px;top:352px;width:57px;height:27px;line-height:27px;color:#2f5fa8;-webkit-text-stroke:0.1px currentColor">半/一</div><div style="left:545px;top:351px;width:46px;height:27px;background:#fffaf7;"></div><div class="t" style="left:545px;top:353px;width:46px;height:27px;line-height:27px;color:#333333">0.95</div><div style="left:592px;top:351px;width:61px;height:27px;background:#f1f8fc;"></div><div class="t" style="left:592px;top:353px;width:61px;height:27px;line-height:27px;color:#333333">1.66</div><div style="left:654px;top:351px;width:62px;height:27px;background:#f1f8fc;"></div><div class="t" style="left:654px;top:353px;width:62px;height:27px;line-height:27px;color:#2f5fa8">3.42</div><div style="left:717px;top:351px;width:61px;height:27px;background:#f1f8fc;"></div><div class="t" style="left:717px;top:353px;width:61px;height:27px;line-height:27px;color:#333333">5.32</div><div style="left:779px;top:351px;width:38px;height:27px;background:#efefef;"></div><div class="t" style="left:779px;top:352px;width:38px;height:27px;line-height:27px;color:#ff0000;-webkit-text-stroke:0.1px currentColor">胜</div><div style="left:818px;top:351px;width:37px;height:27px;background:#efefef;"></div><div class="t" style="left:818px;top:352px;width:37px;height:27px;line-height:27px;color:#ff0000;-webkit-text-stroke:0.1px currentColor">赢</div><div style="left:856px;top:351px;width:55px;height:27px;background:#efefef;"></div><div class="t" style="left:856px;top:352px;width:55px;height:27px;line-height:27px;color:#008000;-webkit-text-stroke:0.1px currentColor">小</div><div class="s" style="left:375px;top:40px;color:#333333;-webkit-text-stroke:0.1px currentColor">近</div><div class="sl" style="left:391px;top:39px;width:36px;height:16px"><div class="st" style="left:4px;top:0px;height:14px;line-height:14px;font-size:11px">10</div><svg style="position:absolute;right:4px;top:3px" width="10" height="8"><path d="M1 2L5 6L9 2" fill="none" stroke="#000" stroke-width="2"/></svg></div><div class="s" style="left:431px;top:40px;color:#333333;-webkit-text-stroke:0.1px currentColor">场</div><input type="checkbox" class="cb" style="left:447px;top:41px" ><div class="s" style="left:465px;top:40px;color:#333333;-webkit-text-stroke:0.1px currentColor">同主</div><input type="checkbox" class="cb" style="left:488px;top:41px" checked><div class="s" style="left:501px;top:40px;color:#333333;-webkit-text-stroke:0.1px currentColor">巴西乙</div><input type="checkbox" class="cb" style="left:537px;top:41px" checked><div class="s" style="left:550px;top:40px;color:#333333;-webkit-text-stroke:0.1px currentColor">巴圣锦标</div><div class="sl" style="left:464px;top:59px;width:60px;height:20px"><div class="st" style="left:4px;top:1px;height:18px;line-height:18px;font-size:13px">Crow*</div><svg style="position:absolute;right:4px;top:5px" width="10" height="8"><path d="M1 2L5 6L9 2" fill="none" stroke="#000" stroke-width="2"/></svg></div><div class="sl" style="left:531px;top:59px;width:36px;height:20px"><div class="st" style="left:4px;top:0px;height:18px;line-height:18px;font-size:12px">终</div><svg style="position:absolute;right:4px;top:5px" width="10" height="8"><path d="M1 2L5 6L9 2" fill="none" stroke="#000" stroke-width="2"/></svg></div><div class="sl" style="left:621px;top:59px;width:84px;height:20px"><div class="st" style="left:4px;top:0px;height:18px;line-height:18px;font-size:12px">胜平负均值</div><svg style="position:absolute;right:4px;top:5px" width="10" height="8"><path d="M1 2L5 6L9 2" fill="none" stroke="#000" stroke-width="2"/></svg></div><div class="sl" style="left:713px;top:59px;width:36px;height:20px"><div class="st" style="left:4px;top:0px;height:18px;line-height:18px;font-size:12px">终</div><svg style="position:absolute;right:4px;top:5px" width="10" height="8"><path d="M1 2L5 6L9 2" fill="none" stroke="#000" stroke-width="2"/></svg></div><div class="sl" style="left:821px;top:59px;width:48px;height:20px"><div class="st" style="left:4px;top:0px;height:18px;line-height:18px;font-size:12px">全场</div><svg style="position:absolute;right:4px;top:5px" width="10" height="8"><path d="M1 2L5 6L9 2" fill="none" stroke="#000" stroke-width="2"/></svg></div><div style="left:3px;top:379px;width:908px;height:27px;background:#ffffff;"></div><div class="t" style="left:2px;top:380px;width:908px;height:27px;line-height:27px;color:#333333;letter-spacing:0.2px">近<span style="color:#ff0000">10</span>场,胜6平2负2, 胜率:<span style="color:#0000ff">60%</span> 赢率:<b class="rb">70%</b> 大:<b class="gb">30%</b> 单率:<span style="color:#0000ff">60%</span></div><div class="s" style="left:22px;top:416px;font-weight:bold;font-size:12px;letter-spacing:1px;color:#2c54a6;-webkit-text-stroke:0.15px #2c54a6">米内罗美洲</div><div style="left:2px;top:432px;width:910px;height:350px;background:#c0c0c0;"></div><div style="left:3px;top:433px;width:53px;height:40px;background:#dce4ee;"></div><div class="t" style="left:3px;top:434px;width:53px;height:40px;line-height:40px;color:#333333;-webkit-text-stroke:0.1px currentColor">类型</div><div style="left:57px;top:433px;width:70px;height:40px;background:#dce4ee;"></div><div class="t" style="left:57px;top:434px;width:70px;height:40px;line-height:40px;color:#333333;-webkit-text-stroke:0.1px currentColor">日期</div><div style="left:128px;top:433px;width:116px;height:40px;background:#dce4ee;"></div><div class="t" style="left:128px;top:434px;width:116px;height:40px;line-height:40px;color:#333333;-webkit-text-stroke:0.1px currentColor">主场</div><div style="left:245px;top:433px;width:82px;height:40px;background:#dce4ee;"></div><div class="t" style="left:245px;top:434px;width:82px;height:40px;line-height:40px;color:#333333;-webkit-text-stroke:0.1px currentColor">比分(半场)</div><div style="left:328px;top:433px;width:37px;height:40px;background:#dce4ee;"></div><div class="t" style="left:328px;top:434px;width:37px;height:40px;line-height:40px;color:#333333;-webkit-text-stroke:0.1px currentColor">角球</div><div style="left:366px;top:433px;width:88px;height:40px;background:#dce4ee;"></div><div class="t" style="left:366px;top:434px;width:88px;height:40px;line-height:40px;color:#333333;-webkit-text-stroke:0.1px currentColor">客场</div><div style="left:455px;top:433px;width:146px;height:22px;background:#dce4ee;"></div><div style="left:602px;top:433px;width:180px;height:22px;background:#dce4ee;"></div><div style="left:783px;top:433px;width:128px;height:22px;background:#dce4ee;"></div><div style="left:455px;top:456px;width:39px;height:17px;background:#dce4ee;"></div><div class="t" style="left:455px;top:457px;width:39px;height:17px;line-height:17px;color:#333333;-webkit-text-stroke:0.1px currentColor">主</div><div style="left:495px;top:456px;width:66px;height:17px;background:#dce4ee;"></div><div class="t" style="left:495px;top:457px;width:66px;height:17px;line-height:17px;color:#333333;-webkit-text-stroke:0.1px currentColor">盘口</div><div style="left:562px;top:456px;width:39px;height:17px;background:#dce4ee;"></div><div class="t" style="left:562px;top:457px;width:39px;height:17px;line-height:17px;color:#333333;-webkit-text-stroke:0.1px currentColor">客</div><div style="left:602px;top:456px;width:60px;height:17px;background:#dce4ee;"></div><div class="t" style="left:602px;top:457px;width:60px;height:17px;line-height:17px;color:#333333;-webkit-text-stroke:0.1px currentColor">主</div><div style="left:663px;top:456px;width:59px;height:17px;background:#dce4ee;"></div><div class="t" style="left:663px;top:457px;width:59px;height:17px;line-height:17px;color:#333333;-webkit-text-stroke:0.1px currentColor">和</div><div style="left:723px;top:456px;width:59px;height:17px;background:#dce4ee;"></div><div class="t" style="left:723px;top:457px;width:59px;height:17px;line-height:17px;color:#333333;-webkit-text-stroke:0.1px currentColor">客</div><div style="left:783px;top:456px;width:37px;height:17px;background:#dce4ee;"></div><div class="t" style="left:783px;top:457px;width:37px;height:17px;line-height:17px;color:#333333;-webkit-text-stroke:0.1px currentColor">胜负</div><div style="left:821px;top:456px;width:36px;height:17px;background:#dce4ee;"></div><div class="t" style="left:821px;top:457px;width:36px;height:17px;line-height:17px;color:#333333;-webkit-text-stroke:0.1px currentColor">让球</div><div style="left:858px;top:456px;width:53px;height:17px;background:#dce4ee;"></div><div class="t" style="left:858px;top:457px;width:53px;height:17px;line-height:17px;color:#333333;-webkit-text-stroke:0.1px currentColor">进球数</div><div style="left:3px;top:474px;width:53px;height:27px;background:#b6b500;"></div><div class="t" style="left:3px;top:475px;width:53px;height:27px;line-height:27px;color:#fff;-webkit-text-stroke:0.1px currentColor">巴西乙</div><div style="left:57px;top:474px;width:70px;height:27px;background:#ffffff;"></div><div class="t" style="left:57px;top:476px;width:70px;height:27px;line-height:27px;color:#333333">24-08-26</div><div style="left:128px;top:474px;width:116px;height:27px;background:#ffffff;"></div><div class="t" style="left:128px;top:475px;width:116px;height:27px;line-height:27px;color:#000;-webkit-text-stroke:0.1px currentColor">维拉诺瓦</div><div style="left:245px;top:474px;width:82px;height:27px;background:#ffffff;"></div><div class="t" style="left:245px;top:476px;width:82px;height:27px;line-height:27px;color:#333333"><span style="color:#ff0000">1-0</span>(0-0)</div><div style="left:328px;top:474px;width:37px;height:27px;background:#ffffff;"></div><div class="t" style="left:328px;top:476px;width:37px;height:27px;line-height:27px;color:#333333">1-10</div><div style="left:366px;top:474px;width:88px;height:27px;background:#ffffff;"></div><div class="t" style="left:366px;top:475px;width:88px;height:27px;line-height:27px;color:#000;-webkit-text-stroke:0.1px currentColor"><span style="color:#008000">米内罗美洲</span></div><div style="left:455px;top:474px;width:39px;height:27px;background:#fffaf7;"></div><div class="t" style="left:455px;top:476px;width:39px;height:27px;line-height:27px;color:#333333">1.11</div><div style="left:495px;top:474px;width:66px;height:27px;background:#fffaf7;"></div><div class="t" style="left:495px;top:475px;width:66px;height:27px;line-height:27px;color:#2f5fa8;-webkit-text-stroke:0.1px currentColor">平/半</div><div style="left:562px;top:474px;width:39px;height:27px;background:#fffaf7;"></div><div class="t" style="left:562px;top:476px;width:39px;height:27px;line-height:27px;color:#333333">0.78</div><div style="left:602px;top:474px;width:60px;height:27px;background:#f1f8fc;"></div><div class="t" style="left:602px;top:476px;width:60px;height:27px;line-height:27px;color:#333333">2.36</div><div style="left:663px;top:474px;width:59px;height:27px;background:#f1f8fc;"></div><div class="t" style="left:663px;top:476px;width:59px;height:27px;line-height:27px;color:#2f5fa8">2.96</div><div style="left:723px;top:474px;width:59px;height:27px;background:#f1f8fc;"></div><div class="t" style="left:723px;top:476px;width:59px;height:27px;line-height:27px;color:#333333">3.11</div><div style="left:783px;top:474px;width:37px;height:27px;background:#ffffff;"></div><div class="t" style="left:783px;top:475px;width:37px;height:27px;line-height:27px;color:#008000;-webkit-text-stroke:0.1px currentColor">负</div><div style="left:821px;top:474px;width:36px;height:27px;background:#ffffff;"></div><div class="t" style="left:821px;top:475px;width:36px;height:27px;line-height:27px;color:#008000;-webkit-text-stroke:0.1px currentColor">输</div><div style="left:858px;top:474px;width:53px;height:27px;background:#ffffff;"></div><div class="t" style="left:858px;top:475px;width:53px;height:27px;line-height:27px;color:#008000;-webkit-text-stroke:0.1px currentColor">小</div><div style="left:3px;top:502px;width:53px;height:27px;background:#b6b500;"></div><div class="t" style="left:3px;top:503px;width:53px;height:27px;line-height:27px;color:#fff;-webkit-text-stroke:0.1px currentColor">巴西乙</div><div style="left:57px;top:502px;width:70px;height:27px;background:#efefef;"></div><div class="t" style="left:57px;top:504px;width:70px;height:27px;line-height:27px;color:#333333">24-08-22</div><div style="left:128px;top:502px;width:116px;height:27px;background:#efefef;"></div><div class="t" style="left:128px;top:503px;width:116px;height:27px;line-height:27px;color:#000;-webkit-text-stroke:0.1px currentColor"><span style="color:#008000">米内罗美洲</span></div><div style="left:245px;top:502px;width:82px;height:27px;background:#efefef;"></div><div class="t" style="left:245px;top:504px;width:82px;height:27px;line-height:27px;color:#333333"><span style="color:#ff0000">0-0</span>(0-0)</div><div style="left:328px;top:502px;width:37px;height:27px;background:#efefef;"></div><div class="t" style="left:328px;top:504px;width:37px;height:27px;line-height:27px;color:#333333">7-6</div><div style="left:366px;top:502px;width:88px;height:27px;background:#efefef;"></div><div class="t" style="left:366px;top:503px;width:88px;height:27px;line-height:27px;color:#000;-webkit-text-stroke:0.1px currentColor">沙佩科恩斯</div><div style="left:455px;top:502px;width:39px;height:27px;background:#fffaf7;"></div><div class="t" style="left:455px;top:504px;width:39px;height:27px;line-height:27px;color:#333333">1.05</div><div style="left:495px;top:502px;width:66px;height:27px;background:#fffaf7;"></div><div class="t" style="left:495px;top:503px;width:66px;height:27px;line-height:27px;color:#2f5fa8;-webkit-text-stroke:0.1px currentColor">一/球半</div><div style="left:562px;top:502px;width:39px;height:27px;background:#fffaf7;"></div><div class="t" style="left:562px;top:504px;width:39px;height:27px;line-height:27px;color:#333333">0.83</div><div style="left:602px;top:502px;width:60px;height:27px;background:#f1f8fc;"></div><div class="t" style="left:602px;top:504px;width:60px;height:27px;line-height:27px;color:#333333">1.49</div><div style="left:663px;top:502px;width:59px;height:27px;background:#f1f8fc;"></div><div class="t" style="left:663px;top:504px;width:59px;height:27px;line-height:27px;color:#2f5fa8">3.91</div><div style="left:723px;top:502px;width:59px;height:27px;background:#f1f8fc;"></div><div class="t" style="left:723px;top:504px;width:59px;height:27px;line-height:27px;color:#333333">6.58</div><div style="left:783px;top:502px;width:37px;height:27px;background:#efefef;"></div><div class="t" style="left:783px;top:503px;width:37px;height:27px;line-height:27px;color:#0000ff;-webkit-text-stroke:0.1px currentColor">平</div><div style="left:821px;top:502px;width:36px;height:27px;background:#efefef;"></div><div class="t" style="left:821px;top:503px;width:36px;height:27px;line-height:27px;color:#008000;-webkit-text-stroke:0.1px currentColor">输</div><div style="left:858px;top:502px;width:53px;height:27px;background:#efefef;"></div><div class="t" style="left:858px;top:503px;width:53px;height:27px;line-height:27px;color:#008000;-webkit-text-stroke:0.1px currentColor">小</div><div style="left:3px;top:530px;width:53px;height:27px;background:#b6b500;"></div><div class="t" style="left:3px;top:531px;width:53px;height:27px;line-height:27px;color:#fff;-webkit-text-stroke:0.1px currentColor">巴西乙</div><div style="left:57px;top:530px;width:70px;height:27px;background:#ffffff;"></div><div class="t" style="left:57px;top:532px;width:70px;height:27px;line-height:27px;color:#333333">24-08-17</div><div style="left:128px;top:530px;width:116px;height:27px;background:#ffffff;"></div><div class="t" style="left:128px;top:531px;width:116px;height:27px;line-height:27px;color:#000;-webkit-text-stroke:0.1px currentColor">诺瓦里桑蒂诺</div><div style="left:245px;top:530px;width:82px;height:27px;background:#ffffff;"></div><div class="t" style="left:245px;top:532px;width:82px;height:27px;line-height:27px;color:#333333"><span style="color:#ff0000">1-1</span>(1-1)</div><div style="left:328px;top:530px;width:37px;height:27px;background:#ffffff;"></div><div class="t" style="left:328px;top:532px;width:37px;height:27px;line-height:27px;color:#333333">3-6</div><div style="left:366px;top:530px;width:88px;height:27px;background:#ffffff;"></div><div class="t" style="left:366px;top:531px;width:88px;height:27px;line-height:27px;color:#000;-webkit-text-stroke:0.1px currentColor"><span style="color:#008000">米内罗美洲</span></div><div style="left:455px;top:530px;width:39px;height:27px;background:#fffaf7;"></div><div class="t" style="left:455px;top:532px;width:39px;height:27px;line-height:27px;color:#333333">1.02</div><div style="left:495px;top:530px;width:66px;height:27px;background:#fffaf7;"></div><div class="t" style="left:495px;top:531px;width:66px;height:27px;line-height:27px;color:#2f5fa8;-webkit-text-stroke:0.1px currentColor">平/半</div><div style="left:562px;top:530px;width:39px;height:27px;background:#fffaf7;"></div><div class="t" style="left:562px;top:532px;width:39px;height:27px;line-height:27px;color:#333333">0.87</div><div style="left:602px;top:530px;width:60px;height:27px;background:#f1f8fc;"></div><div class="t" style="left:602px;top:532px;width:60px;height:27px;line-height:27px;color:#333333">2.33</div><div style="left:663px;top:530px;width:59px;height:27px;background:#f1f8fc;"></div><div class="t" style="left:663px;top:532px;width:59px;height:27px;line-height:27px;color:#2f5fa8">2.76</div><div style="left:723px;top:530px;width:59px;height:27px;background:#f1f8fc;"></div><div class="t" style="left:723px;top:532px;width:59px;height:27px;line-height:27px;color:#333333">3.45</div><div style="left:783px;top:530px;width:37px;height:27px;background:#ffffff;"></div><div class="t" style="left:783px;top:531px;width:37px;height:27px;line-height:27px;color:#0000ff;-webkit-text-stroke:0.1px currentColor">平</div><div style="left:821px;top:530px;width:36px;height:27px;background:#ffffff;"></div><div class="t" style="left:821px;top:531px;width:36px;height:27px;line-height:27px;color:#ff0000;-webkit-text-stroke:0.1px currentColor">赢</div><div style="left:858px;top:530px;width:53px;height:27px;background:#ffffff;"></div><div class="t" style="left:858px;top:531px;width:53px;height:27px;line-height:27px;color:#ff0000;-webkit-text-stroke:0.1px currentColor">大</div><div style="left:3px;top:558px;width:53px;height:27px;background:#b6b500;"></div><div class="t" style="left:3px;top:559px;width:53px;height:27px;line-height:27px;color:#fff;-webkit-text-stroke:0.1px currentColor">巴西乙</div><div style="left:57px;top:558px;width:70px;height:27px;background:#efefef;"></div><div class="t" style="left:57px;top:560px;width:70px;height:27px;line-height:27px;color:#333333">24-08-10</div><div style="left:128px;top:558px;width:116px;height:27px;background:#efefef;"></div><div class="t" style="left:128px;top:559px;width:116px;height:27px;line-height:27px;color:#000;-webkit-text-stroke:0.1px currentColor"><span style="color:#008000">米内罗美洲</span></div><div style="left:245px;top:558px;width:82px;height:27px;background:#efefef;"></div><div class="t" style="left:245px;top:560px;width:82px;height:27px;line-height:27px;color:#333333"><span style="color:#ff0000">3-1</span>(2-0)</div><div style="left:328px;top:558px;width:37px;height:27px;background:#efefef;"></div><div class="t" style="left:328px;top:560px;width:37px;height:27px;line-height:27px;color:#333333">5-5</div><div style="left:366px;top:558px;width:88px;height:27px;background:#efefef;"></div><div class="t" style="left:366px;top:559px;width:88px;height:27px;line-height:27px;color:#000;-webkit-text-stroke:0.1px currentColor">保地花高SP</div><div style="left:455px;top:558px;width:39px;height:27px;background:#fffaf7;"></div><div class="t" style="left:455px;top:560px;width:39px;height:27px;line-height:27px;color:#333333">1.09</div><div style="left:495px;top:558px;width:66px;height:27px;background:#fffaf7;"></div><div class="t" style="left:495px;top:559px;width:66px;height:27px;line-height:27px;color:#2f5fa8;-webkit-text-stroke:0.1px currentColor">一球</div><div style="left:562px;top:558px;width:39px;height:27px;background:#fffaf7;"></div><div class="t" style="left:562px;top:560px;width:39px;height:27px;line-height:27px;color:#333333">0.79</div><div style="left:602px;top:558px;width:60px;height:27px;background:#f1f8fc;"></div><div class="t" style="left:602px;top:560px;width:60px;height:27px;line-height:27px;color:#333333">1.54</div><div style="left:663px;top:558px;width:59px;height:27px;background:#f1f8fc;"></div><div class="t" style="left:663px;top:560px;width:59px;height:27px;line-height:27px;color:#2f5fa8">3.66</div><div style="left:723px;top:558px;width:59px;height:27px;background:#f1f8fc;"></div><div class="t" style="left:723px;top:560px;width:59px;height:27px;line-height:27px;color:#333333">6.40</div><div style="left:783px;top:558px;width:37px;height:27px;background:#efefef;"></div><div class="t" style="left:783px;top:559px;width:37px;height:27px;line-height:27px;color:#ff0000;-webkit-text-stroke:0.1px currentColor">胜</div><div style="left:821px;top:558px;width:36px;height:27px;background:#efefef;"></div><div class="t" style="left:821px;top:559px;width:36px;height:27px;line-height:27px;color:#ff0000;-webkit-text-stroke:0.1px currentColor">赢</div><div style="left:858px;top:558px;width:53px;height:27px;background:#efefef;"></div><div class="t" style="left:858px;top:559px;width:53px;height:27px;line-height:27px;color:#ff0000;-webkit-text-stroke:0.1px currentColor">大</div><div style="left:3px;top:586px;width:53px;height:27px;background:#b6b500;"></div><div class="t" style="left:3px;top:587px;width:53px;height:27px;line-height:27px;color:#fff;-webkit-text-stroke:0.1px currentColor">巴西乙</div><div style="left:57px;top:586px;width:70px;height:27px;background:#ffffff;"></div><div class="t" style="left:57px;top:588px;width:70px;height:27px;line-height:27px;color:#333333">24-08-03</div><div style="left:128px;top:586px;width:116px;height:27px;background:#ffffff;"></div><div class="t" style="left:128px;top:587px;width:116px;height:27px;line-height:27px;color:#000;-webkit-text-stroke:0.1px currentColor">普拉斯哥野(中)</div><div style="left:245px;top:586px;width:82px;height:27px;background:#ffffff;"></div><div class="t" style="left:245px;top:588px;width:82px;height:27px;line-height:27px;color:#333333"><span style="color:#ff0000">0-0</span>(0-0)</div><div style="left:328px;top:586px;width:37px;height:27px;background:#ffffff;"></div><div class="t" style="left:328px;top:588px;width:37px;height:27px;line-height:27px;color:#333333">8-4</div><div style="left:366px;top:586px;width:88px;height:27px;background:#ffffff;"></div><div class="t" style="left:366px;top:587px;width:88px;height:27px;line-height:27px;color:#000;-webkit-text-stroke:0.1px currentColor"><span style="color:#008000">米内罗美洲</span></div><div style="left:455px;top:586px;width:39px;height:27px;background:#fffaf7;"></div><div class="t" style="left:455px;top:588px;width:39px;height:27px;line-height:27px;color:#333333">1.00</div><div style="left:495px;top:586px;width:66px;height:27px;background:#fffaf7;"></div><div class="t" style="left:495px;top:587px;width:66px;height:27px;line-height:27px;color:#2f5fa8;-webkit-text-stroke:0.1px currentColor"><span style="color:#ff0000">*</span>平/半</div><div style="left:562px;top:586px;width:39px;height:27px;background:#fffaf7;"></div><div class="t" style="left:562px;top:588px;width:39px;height:27px;line-height:27px;color:#333333">0.88</div><div style="left:602px;top:586px;width:60px;height:27px;background:#f1f8fc;"></div><div class="t" style="left:602px;top:588px;width:60px;height:27px;line-height:27px;color:#333333">3.37</div><div style="left:663px;top:586px;width:59px;height:27px;background:#f1f8fc;"></div><div class="t" style="left:663px;top:588px;width:59px;height:27px;line-height:27px;color:#2f5fa8">2.89</div><div style="left:723px;top:586px;width:59px;height:27px;background:#f1f8fc;"></div><div class="t" style="left:723px;top:588px;width:59px;height:27px;line-height:27px;color:#333333">2.28</div><div style="left:783px;top:586px;width:37px;height:27px;background:#ffffff;"></div><div class="t" style="left:783px;top:587px;width:37px;height:27px;line-height:27px;color:#0000ff;-webkit-text-stroke:0.1px currentColor">平</div><div style="left:821px;top:586px;width:36px;height:27px;background:#ffffff;"></div><div class="t" style="left:821px;top:587px;width:36px;height:27px;line-height:27px;color:#008000;-webkit-text-stroke:0.1px currentColor">输</div><div style="left:858px;top:586px;width:53px;height:27px;background:#ffffff;"></div><div class="t" style="left:858px;top:587px;width:53px;height:27px;line-height:27px;color:#008000;-webkit-text-stroke:0.1px currentColor">小</div><div style="left:3px;top:614px;width:53px;height:27px;background:#b6b500;"></div><div class="t" style="left:3px;top:615px;width:53px;height:27px;line-height:27px;color:#fff;-webkit-text-stroke:0.1px currentColor">巴西乙</div><div style="left:57px;top:614px;width:70px;height:27px;background:#efefef;"></div><div class="t" style="left:57px;top:616px;width:70px;height:27px;line-height:27px;color:#333333">24-07-29</div><div style="left:128px;top:614px;width:116px;height:27px;background:#efefef;"></div><div class="t" style="left:128px;top:615px;width:116px;height:27px;line-height:27px;color:#000;-webkit-text-stroke:0.1px currentColor"><span style="color:#008000">米内罗美洲</span></div><div style="left:245px;top:614px;width:82px;height:27px;background:#efefef;"></div><div class="t" style="left:245px;top:616px;width:82px;height:27px;line-height:27px;color:#333333"><span style="color:#ff0000">2-2</span>(2-2)</div><div style="left:328px;top:614px;width:37px;height:27px;background:#efefef;"></div><div class="t" style="left:328px;top:616px;width:37px;height:27px;line-height:27px;color:#333333">4-4</div><div style="left:366px;top:614px;width:88px;height:27px;background:#efefef;"></div><div class="t" style="left:366px;top:615px;width:88px;height:27px;line-height:27px;color:#000;-webkit-text-stroke:0.1px currentColor">塞阿拉</div><div style="left:455px;top:614px;width:39px;height:27px;background:#fffaf7;"></div><div class="t" style="left:455px;top:616px;width:39px;height:27px;line-height:27px;color:#333333">1.04</div><div style="left:495px;top:614px;width:66px;height:27px;background:#fffaf7;"></div><div class="t" style="left:495px;top:615px;width:66px;height:27px;line-height:27px;color:#2f5fa8;-webkit-text-stroke:0.1px currentColor">半球</div><div style="left:562px;top:614px;width:39px;height:27px;background:#fffaf7;"></div><div class="t" style="left:562px;top:616px;width:39px;height:27px;line-height:27px;color:#333333">0.86</div><div style="left:602px;top:614px;width:60px;height:27px;background:#f1f8fc;"></div><div class="t" style="left:602px;top:616px;width:60px;height:27px;line-height:27px;color:#333333">1.95</div><div style="left:663px;top:614px;width:59px;height:27px;background:#f1f8fc;"></div><div class="t" style="left:663px;top:616px;width:59px;height:27px;line-height:27px;color:#2f5fa8">3.17</div><div style="left:723px;top:614px;width:59px;height:27px;background:#f1f8fc;"></div><div class="t" style="left:723px;top:616px;width:59px;height:27px;line-height:27px;color:#333333">3.97</div><div style="left:783px;top:614px;width:37px;height:27px;background:#efefef;"></div><div class="t" style="left:783px;top:615px;width:37px;height:27px;line-height:27px;color:#0000ff;-webkit-text-stroke:0.1px currentColor">平</div><div style="left:821px;top:614px;width:36px;height:27px;background:#efefef;"></div><div class="t" style="left:821px;top:615px;width:36px;height:27px;line-height:27px;color:#008000;-webkit-text-stroke:0.1px currentColor">输</div><div style="left:858px;top:614px;width:53px;height:27px;background:#efefef;"></div><div class="t" style="left:858px;top:615px;width:53px;height:27px;line-height:27px;color:#ff0000;-webkit-text-stroke:0.1px currentColor">大</div><div style="left:3px;top:642px;width:53px;height:27px;background:#b6b500;"></div><div class="t" style="left:3px;top:643px;width:53px;height:27px;line-height:27px;color:#fff;-webkit-text-stroke:0.1px currentColor">巴西乙</div><div style="left:57px;top:642px;width:70px;height:27px;background:#ffffff;"></div><div class="t" style="left:57px;top:644px;width:70px;height:27px;line-height:27px;color:#333333">24-07-24</div><div style="left:128px;top:642px;width:116px;height:27px;background:#ffffff;"></div><div class="t" style="left:128px;top:643px;width:116px;height:27px;line-height:27px;color:#000;-webkit-text-stroke:0.1px currentColor"><b class="bd">1</b>伊图诺</div><div style="left:245px;top:642px;width:82px;height:27px;background:#ffffff;"></div><div class="t" style="left:245px;top:644px;width:82px;height:27px;line-height:27px;color:#333333"><span style="color:#ff0000">0-0</span>(0-0)</div><div style="left:328px;top:642px;width:37px;height:27px;background:#ffffff;"></div><div class="t" style="left:328px;top:644px;width:37px;height:27px;line-height:27px;color:#333333">2-10</div><div style="left:366px;top:642px;width:88px;height:27px;background:#ffffff;"></div><div class="t" style="left:366px;top:643px;width:88px;height:27px;line-height:27px;color:#000;-webkit-text-stroke:0.1px currentColor"><span style="color:#008000">米内罗美洲</span></div><div style="left:455px;top:642px;width:39px;height:27px;background:#fffaf7;"></div><div class="t" style="left:455px;top:644px;width:39px;height:27px;line-height:27px;color:#333333">1.07</div><div style="left:495px;top:642px;width:66px;height:27px;background:#fffaf7;"></div><div class="t" style="left:495px;top:643px;width:66px;height:27px;line-height:27px;color:#2f5fa8;-webkit-text-stroke:0.1px currentColor"><span style="color:#ff0000">*</span>半球</div><div style="left:562px;top:642px;width:39px;height:27px;background:#fffaf7;"></div><div class="t" style="left:562px;top:644px;width:39px;height:27px;line-height:27px;color:#333333">0.81</div><div style="left:602px;top:642px;width:60px;height:27px;background:#f1f8fc;"></div><div class="t" style="left:602px;top:644px;width:60px;height:27px;line-height:27px;color:#333333">4.36</div><div style="left:663px;top:642px;width:59px;height:27px;background:#f1f8fc;"></div><div class="t" style="left:663px;top:644px;width:59px;height:27px;line-height:27px;color:#2f5fa8">3.40</div><div style="left:723px;top:642px;width:59px;height:27px;background:#f1f8fc;"></div><div class="t" style="left:723px;top:644px;width:59px;height:27px;line-height:27px;color:#333333">1.80</div><div style="left:783px;top:642px;width:37px;height:27px;background:#ffffff;"></div><div class="t" style="left:783px;top:643px;width:37px;height:27px;line-height:27px;color:#0000ff;-webkit-text-stroke:0.1px currentColor">平</div><div style="left:821px;top:642px;width:36px;height:27px;background:#ffffff;"></div><div class="t" style="left:821px;top:643px;width:36px;height:27px;line-height:27px;color:#008000;-webkit-text-stroke:0.1px currentColor">输</div><div style="left:858px;top:642px;width:53px;height:27px;background:#ffffff;"></div><div class="t" style="left:858px;top:643px;width:53px;height:27px;line-height:27px;color:#008000;-webkit-text-stroke:0.1px currentColor">小</div><div style="left:3px;top:670px;width:53px;height:27px;background:#b6b500;"></div><div class="t" style="left:3px;top:671px;width:53px;height:27px;line-height:27px;color:#fff;-webkit-text-stroke:0.1px currentColor">巴西乙</div><div style="left:57px;top:670px;width:70px;height:27px;background:#efefef;"></div><div class="t" style="left:57px;top:672px;width:70px;height:27px;line-height:27px;color:#333333">24-07-21</div><div style="left:128px;top:670px;width:116px;height:27px;background:#efefef;"></div><div class="t" style="left:128px;top:671px;width:116px;height:27px;line-height:27px;color:#000;-webkit-text-stroke:0.1px currentColor"><span style="color:#008000">米内罗美洲</span></div><div style="left:245px;top:670px;width:82px;height:27px;background:#efefef;"></div><div class="t" style="left:245px;top:672px;width:82px;height:27px;line-height:27px;color:#333333"><span style="color:#ff0000">0-0</span>(0-0)</div><div style="left:328px;top:670px;width:37px;height:27px;background:#efefef;"></div><div class="t" style="left:328px;top:672px;width:37px;height:27px;line-height:27px;color:#333333">7-8</div><div style="left:366px;top:670px;width:88px;height:27px;background:#efefef;"></div><div class="t" style="left:366px;top:671px;width:88px;height:27px;line-height:27px;color:#000;-webkit-text-stroke:0.1px currentColor">亚马逊FC</div><div style="left:455px;top:670px;width:39px;height:27px;background:#fffaf7;"></div><div class="t" style="left:455px;top:672px;width:39px;height:27px;line-height:27px;color:#333333">1.08</div><div style="left:495px;top:670px;width:66px;height:27px;background:#fffaf7;"></div><div class="t" style="left:495px;top:671px;width:66px;height:27px;line-height:27px;color:#2f5fa8;-webkit-text-stroke:0.1px currentColor">一球</div><div style="left:562px;top:670px;width:39px;height:27px;background:#fffaf7;"></div><div class="t" style="left:562px;top:672px;width:39px;height:27px;line-height:27px;color:#333333">0.82</div><div style="left:602px;top:670px;width:60px;height:27px;background:#f1f8fc;"></div><div class="t" style="left:602px;top:672px;width:60px;height:27px;line-height:27px;color:#333333">1.59</div><div style="left:663px;top:670px;width:59px;height:27px;background:#f1f8fc;"></div><div class="t" style="left:663px;top:672px;width:59px;height:27px;line-height:27px;color:#2f5fa8">3.61</div><div style="left:723px;top:670px;width:59px;height:27px;background:#f1f8fc;"></div><div class="t" style="left:723px;top:672px;width:59px;height:27px;line-height:27px;color:#333333">5.66</div><div style="left:783px;top:670px;width:37px;height:27px;background:#efefef;"></div><div class="t" style="left:783px;top:671px;width:37px;height:27px;line-height:27px;color:#0000ff;-webkit-text-stroke:0.1px currentColor">平</div><div style="left:821px;top:670px;width:36px;height:27px;background:#efefef;"></div><div class="t" style="left:821px;top:671px;width:36px;height:27px;line-height:27px;color:#008000;-webkit-text-stroke:0.1px currentColor">输</div><div style="left:858px;top:670px;width:53px;height:27px;background:#efefef;"></div><div class="t" style="left:858px;top:671px;width:53px;height:27px;line-height:27px;color:#008000;-webkit-text-stroke:0.1px currentColor">小</div><div style="left:3px;top:698px;width:53px;height:27px;background:#b6b500;"></div><div class="t" style="left:3px;top:699px;width:53px;height:27px;line-height:27px;color:#fff;-webkit-text-stroke:0.1px currentColor">巴西乙</div><div style="left:57px;top:698px;width:70px;height:27px;background:#ffffff;"></div><div class="t" style="left:57px;top:700px;width:70px;height:27px;line-height:27px;color:#333333">24-07-14</div><div style="left:128px;top:698px;width:116px;height:27px;background:#ffffff;"></div><div class="t" style="left:128px;top:699px;width:116px;height:27px;line-height:27px;color:#000;-webkit-text-stroke:0.1px currentColor">累西腓体育</div><div style="left:245px;top:698px;width:82px;height:27px;background:#ffffff;"></div><div class="t" style="left:245px;top:700px;width:82px;height:27px;line-height:27px;color:#333333"><span style="color:#ff0000">1-1</span>(0-1)</div><div style="left:328px;top:698px;width:37px;height:27px;background:#ffffff;"></div><div class="t" style="left:328px;top:700px;width:37px;height:27px;line-height:27px;color:#333333">9-3</div><div style="left:366px;top:698px;width:88px;height:27px;background:#ffffff;"></div><div class="t" style="left:366px;top:699px;width:88px;height:27px;line-height:27px;color:#000;-webkit-text-stroke:0.1px currentColor"><span style="color:#008000">米内罗美洲</span></div><div style="left:455px;top:698px;width:39px;height:27px;background:#fffaf7;"></div><div class="t" style="left:455px;top:700px;width:39px;height:27px;line-height:27px;color:#333333">0.82</div><div style="left:495px;top:698px;width:66px;height:27px;background:#fffaf7;"></div><div class="t" style="left:495px;top:699px;width:66px;height:27px;line-height:27px;color:#2f5fa8;-webkit-text-stroke:0.1px currentColor">平/半</div><div style="left:562px;top:698px;width:39px;height:27px;background:#fffaf7;"></div><div class="t" style="left:562px;top:700px;width:39px;height:27px;line-height:27px;color:#333333">1.06</div><div style="left:602px;top:698px;width:60px;height:27px;background:#f1f8fc;"></div><div class="t" style="left:602px;top:700px;width:60px;height:27px;line-height:27px;color:#333333">2.05</div><div style="left:663px;top:698px;width:59px;height:27px;background:#f1f8fc;"></div><div class="t" style="left:663px;top:700px;width:59px;height:27px;line-height:27px;color:#2f5fa8">3.11</div><div style="left:723px;top:698px;width:59px;height:27px;background:#f1f8fc;"></div><div class="t" style="left:723px;top:700px;width:59px;height:27px;line-height:27px;color:#333333">3.67</div><div style="left:783px;top:698px;width:37px;height:27px;background:#ffffff;"></div><div class="t" style="left:783px;top:699px;width:37px;height:27px;line-height:27px;color:#0000ff;-webkit-text-stroke:0.1px currentColor">平</div><div style="left:821px;top:698px;width:36px;height:27px;background:#ffffff;"></div><div class="t" style="left:821px;top:699px;width:36px;height:27px;line-height:27px;color:#ff0000;-webkit-text-stroke:0.1px currentColor">赢</div><div style="left:858px;top:698px;width:53px;height:27px;background:#ffffff;"></div><div class="t" style="left:858px;top:699px;width:53px;height:27px;line-height:27px;color:#008000;-webkit-text-stroke:0.1px currentColor">小</div><div style="left:3px;top:726px;width:53px;height:27px;background:#b6b500;"></div><div class="t" style="left:3px;top:727px;width:53px;height:27px;line-height:27px;color:#fff;-webkit-text-stroke:0.1px currentColor">巴西乙</div><div style="left:57px;top:726px;width:70px;height:27px;background:#efefef;"></div><div class="t" style="left:57px;top:728px;width:70px;height:27px;line-height:27px;color:#333333">24-07-06</div><div style="left:128px;top:726px;width:116px;height:27px;background:#efefef;"></div><div class="t" style="left:128px;top:727px;width:116px;height:27px;line-height:27px;color:#000;-webkit-text-stroke:0.1px currentColor"><span style="color:#008000">米内罗美洲</span></div><div style="left:245px;top:726px;width:82px;height:27px;background:#efefef;"></div><div class="t" style="left:245px;top:728px;width:82px;height:27px;line-height:27px;color:#333333"><span style="color:#ff0000">2-0</span>(0-0)</div><div style="left:328px;top:726px;width:37px;height:27px;background:#efefef;"></div><div class="t" style="left:328px;top:728px;width:37px;height:27px;line-height:27px;color:#333333">3-7</div><div style="left:366px;top:726px;width:88px;height:27px;background:#efefef;"></div><div class="t" style="left:366px;top:727px;width:88px;height:27px;line-height:27px;color:#000;-webkit-text-stroke:0.1px currentColor">欧帕尔利奥</div><div style="left:455px;top:726px;width:39px;height:27px;background:#fffaf7;"></div><div class="t" style="left:455px;top:728px;width:39px;height:27px;line-height:27px;color:#333333">1.00</div><div style="left:495px;top:726px;width:66px;height:27px;background:#fffaf7;"></div><div class="t" style="left:495px;top:727px;width:66px;height:27px;line-height:27px;color:#2f5fa8;-webkit-text-stroke:0.1px currentColor">半/一</div><div style="left:562px;top:726px;width:39px;height:27px;background:#fffaf7;"></div><div class="t" style="left:562px;top:728px;width:39px;height:27px;line-height:27px;color:#333333">0.88</div><div style="left:602px;top:726px;width:60px;height:27px;background:#f1f8fc;"></div><div class="t" style="left:602px;top:728px;width:60px;height:27px;line-height:27px;color:#333333">1.64</div><div style="left:663px;top:726px;width:59px;height:27px;background:#f1f8fc;"></div><div class="t" style="left:663px;top:728px;width:59px;height:27px;line-height:27px;color:#2f5fa8">3.45</div><div style="left:723px;top:726px;width:59px;height:27px;background:#f1f8fc;"></div><div class="t" style="left:723px;top:728px;width:59px;height:27px;line-height:27px;color:#333333">5.44</div><div style="left:783px;top:726px;width:37px;height:27px;background:#efefef;"></div><div class="t" style="left:783px;top:727px;width:37px;height:27px;line-height:27px;color:#ff0000;-webkit-text-stroke:0.1px currentColor">胜</div><div style="left:821px;top:726px;width:36px;height:27px;background:#efefef;"></div><div class="t" style="left:821px;top:727px;width:36px;height:27px;line-height:27px;color:#ff0000;-webkit-text-stroke:0.1px currentColor">赢</div><div style="left:858px;top:726px;width:53px;height:27px;background:#efefef;"></div><div class="t" style="left:858px;top:727px;width:53px;height:27px;line-height:27px;color:#0000ff;-webkit-text-stroke:0.1px currentColor">走</div><div class="s" style="left:319px;top:415px;color:#333333;-webkit-text-stroke:0.1px currentColor">近</div><div class="sl" style="left:335px;top:414px;width:36px;height:16px"><div class="st" style="left:4px;top:0px;height:14px;line-height:14px;font-size:11px">10</div><svg style="position:absolute;right:4px;top:3px" width="10" height="8"><path d="M1 2L5 6L9 2" fill="none" stroke="#000" stroke-width="2"/></svg></div><div class="s" style="left:374px;top:415px;color:#333333;-webkit-text-stroke:0.1px currentColor">场</div><input type="checkbox" class="cb" style="left:391px;top:416px" ><div class="s" style="left:408px;top:415px;color:#333333;-webkit-text-stroke:0.1px currentColor">同客</div><input type="checkbox" class="cb" style="left:435px;top:416px" checked><div class="s" style="left:448px;top:415px;color:#333333;-webkit-text-stroke:0.1px currentColor">巴西乙</div><input type="checkbox" class="cb" style="left:484px;top:416px" checked><div class="s" style="left:497px;top:415px;color:#333333;-webkit-text-stroke:0.1px currentColor">巴米联</div><input type="checkbox" class="cb" style="left:533px;top:416px" checked><div class="s" style="left:546px;top:415px;color:#333333;-webkit-text-stroke:0.1px currentColor">巴西杯</div><input type="checkbox" class="cb" style="left:582px;top:416px" checked><div class="s" style="left:595px;top:415px;color:#333333;-webkit-text-stroke:0.1px currentColor">巴西甲</div><input type="checkbox" class="cb" style="left:631px;top:416px" checked><div class="s" style="left:644px;top:415px;color:#333333;-webkit-text-stroke:0.1px currentColor">南球杯</div><div class="sl" style="left:477px;top:434px;width:60px;height:20px"><div class="st" style="left:4px;top:1px;height:18px;line-height:18px;font-size:13px">Crow*</div><svg style="position:absolute;right:4px;top:5px" width="10" height="8"><path d="M1 2L5 6L9 2" fill="none" stroke="#000" stroke-width="2"/></svg></div><div class="sl" style="left:544px;top:434px;width:36px;height:20px"><div class="st" style="left:4px;top:0px;height:18px;line-height:18px;font-size:12px">终</div><svg style="position:absolute;right:4px;top:5px" width="10" height="8"><path d="M1 2L5 6L9 2" fill="none" stroke="#000" stroke-width="2"/></svg></div><div class="sl" style="left:629px;top:434px;width:84px;height:20px"><div class="st" style="left:4px;top:0px;height:18px;line-height:18px;font-size:12px">胜平负均值</div><svg style="position:absolute;right:4px;top:5px" width="10" height="8"><path d="M1 2L5 6L9 2" fill="none" stroke="#000" stroke-width="2"/></svg></div><div class="sl" style="left:720px;top:434px;width:36px;height:20px"><div class="st" style="left:4px;top:0px;height:18px;line-height:18px;font-size:12px">终</div><svg style="position:absolute;right:4px;top:5px" width="10" height="8"><path d="M1 2L5 6L9 2" fill="none" stroke="#000" stroke-width="2"/></svg></div><div class="sl" style="left:823px;top:434px;width:48px;height:20px"><div class="st" style="left:4px;top:0px;height:18px;line-height:18px;font-size:12px">全场</div><svg style="position:absolute;right:4px;top:5px" width="10" height="8"><path d="M1 2L5 6L9 2" fill="none" stroke="#000" stroke-width="2"/></svg></div><div style="left:3px;top:754px;width:908px;height:27px;background:#ffffff;"></div><div class="t" style="left:2px;top:755px;width:908px;height:27px;line-height:27px;color:#333333;letter-spacing:0.2px">近<span style="color:#ff0000">10</span>场,胜2平7负1, 胜率:<b class="gb">20%</b> 赢率:<span style="color:#0000ff">40%</span> 大:<b class="gb">30%</b> 单率:<span style="color:#008000">10%</span></div><div style="left:2px;top:781px;width:910px;height:1px;background:#d8cfc4;"></div><div style="left:2px;top:782px;width:910px;height:4px;background:#1c96d6;box-shadow:inset 1px 1px 0 #0b8ed9,inset -1px 0 0 #0b8ed9"></div></body></html>
